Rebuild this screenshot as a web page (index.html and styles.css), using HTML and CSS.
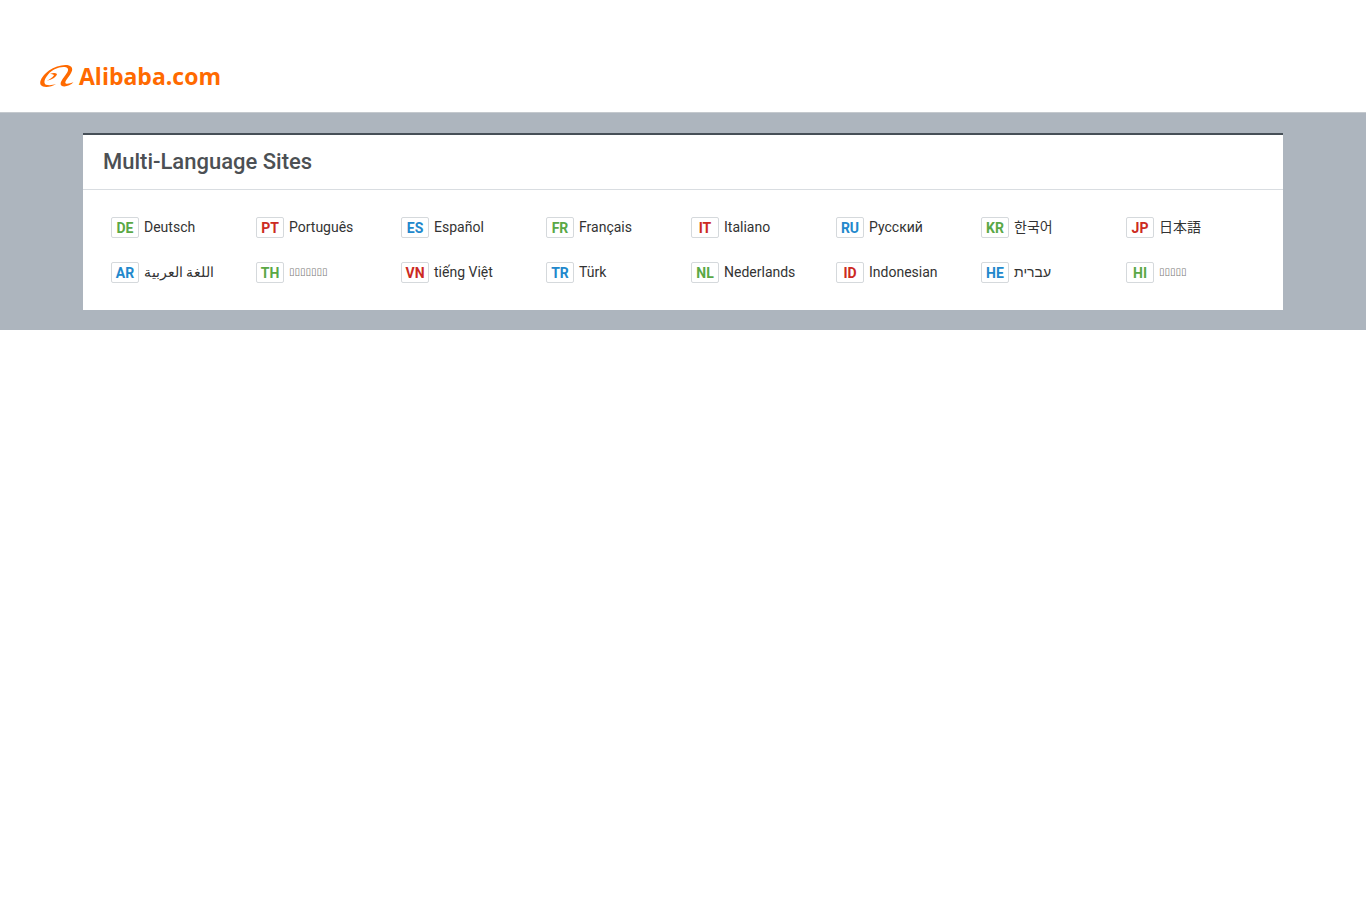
FILE: index.html
```html
<!DOCTYPE html>
<html lang="en">
<head>
<meta charset="utf-8">
<meta name="viewport" content="width=device-width, initial-scale=1">
<title>Multi-Language Sites - Alibaba.com</title>
<link rel="stylesheet" href="styles.css">
</head>
<body>
<header class="header">
  <a class="logo" href="#">
    <svg class="logo-mark" viewBox="0 0 34 24" aria-hidden="true">
      <path d="M16 20.300C11 23.200 3 24 0.800 21C-1.500 17.500 3 11 9 6.500C15 2.200 24 0 29 1.500C33.500 3 32.500 7 30.500 10C28.500 13.200 25.500 16.500 25.300 18.500C25.200 20.500 29.500 19.900 33.500 18.300C30 21.800 24 23.600 21.300 21.500C19 19.300 23 14.500 25.500 11C28 7.500 29.500 4.500 26 3.300C20 2 12.500 5.500 8.500 10C4.500 14.500 3 19.500 6 20.700C9 21.500 12.500 21.100 16 20.300Z"/>
      <path d="M10 10C12.500 8.900 15.500 8.700 17 10C16.300 13.200 12 16 6.500 16.700C9.500 15.500 13 13.200 14 11.200C13 10.200 11.500 10 10 10Z"/>
    </svg>
    <span class="logo-text">Alibaba.com</span>
  </a>
</header>
<main class="content">
  <section class="panel">
    <h1 class="panel-title">Multi-Language Sites</h1>
    <ul class="sites">
      <li><a class="site" href="#"><b class="code green">DE</b><span class="name">Deutsch</span></a></li>
      <li><a class="site" href="#"><b class="code red">PT</b><span class="name">Português</span></a></li>
      <li><a class="site" href="#"><b class="code blue">ES</b><span class="name">Español</span></a></li>
      <li><a class="site" href="#"><b class="code green">FR</b><span class="name">Français</span></a></li>
      <li><a class="site" href="#"><b class="code red">IT</b><span class="name">Italiano</span></a></li>
      <li><a class="site" href="#"><b class="code blue">RU</b><span class="name">Русский</span></a></li>
      <li><a class="site" href="#"><b class="code green">KR</b><span class="name">한국어</span></a></li>
      <li><a class="site" href="#"><b class="code red">JP</b><span class="name">日本語</span></a></li>
      <li><a class="site" href="#"><b class="code blue">AR</b><span class="name">اللغة العربية</span></a></li>
      <li><a class="site" href="#"><b class="code green">TH</b><span class="name boxes">▯▯▯▯▯▯▯</span></a></li>
      <li><a class="site" href="#"><b class="code red">VN</b><span class="name">tiếng Việt</span></a></li>
      <li><a class="site" href="#"><b class="code blue">TR</b><span class="name">Türk</span></a></li>
      <li><a class="site" href="#"><b class="code green">NL</b><span class="name">Nederlands</span></a></li>
      <li><a class="site" href="#"><b class="code red">ID</b><span class="name">Indonesian</span></a></li>
      <li><a class="site" href="#"><b class="code blue">HE</b><span class="name">עברית</span></a></li>
      <li><a class="site" href="#"><b class="code green">HI</b><span class="name boxes">▯▯▯▯▯</span></a></li>
    </ul>
  </section>
</main>
</body>
</html>
```
FILE: styles.css
```css
* {
  box-sizing: border-box;
}

body {
  margin: 0;
  background: #fff;
  color: #333;
  font: 14px/20px Roboto, "Noto Sans CJK JP", sans-serif;
}

.header {
  display: flex;
  padding: 60px 40px 20px;
}

.logo {
  display: flex;
  align-items: center;
  gap: 5px;
  height: 32px;
  color: #ff6a00;
  text-decoration: none;
}

.logo-mark {
  width: 34px;
  height: 24px;
  fill: currentColor;
}

.logo-text {
  font: 700 23px/32px "Open Sans", "Noto Sans", sans-serif;
}

.content {
  padding: 20px;
  border-top: 1px solid #c4c9ce;
  background: #adb5be;
}

.panel {
  max-width: 1200px;
  margin: 0 auto;
  border-top: 2px solid #464f57;
  background: #fff;
}

.panel-title {
  margin: 0;
  padding: 13px 20px;
  border-bottom: 1px solid #d9dde1;
  color: #4c5054;
  font-size: 22px;
  font-weight: 500;
  line-height: 28px;
}

.sites {
  display: grid;
  grid-template-columns: repeat(auto-fill, 145px);
  margin: 0;
  padding: 15px 20px;
  list-style: none;
}

.site {
  display: flex;
  align-items: center;
  gap: 5px;
  height: 45px;
  padding-left: 8px;
  color: inherit;
  text-decoration: none;
  white-space: nowrap;
}

.name {
  padding-bottom: 2px;
}

.boxes {
  color: #777;
  font-family: "DejaVu Sans", sans-serif;
  font-size: 10px;
}

.code {
  width: 28px;
  height: 21px;
  border: 1px solid #d5d9dc;
  border-radius: 2px;
  font-weight: 700;
  text-align: center;
}

.green {
  color: #5aa846;
}

.red {
  color: #cc2a22;
}

.blue {
  color: #2288cc;
}
```
